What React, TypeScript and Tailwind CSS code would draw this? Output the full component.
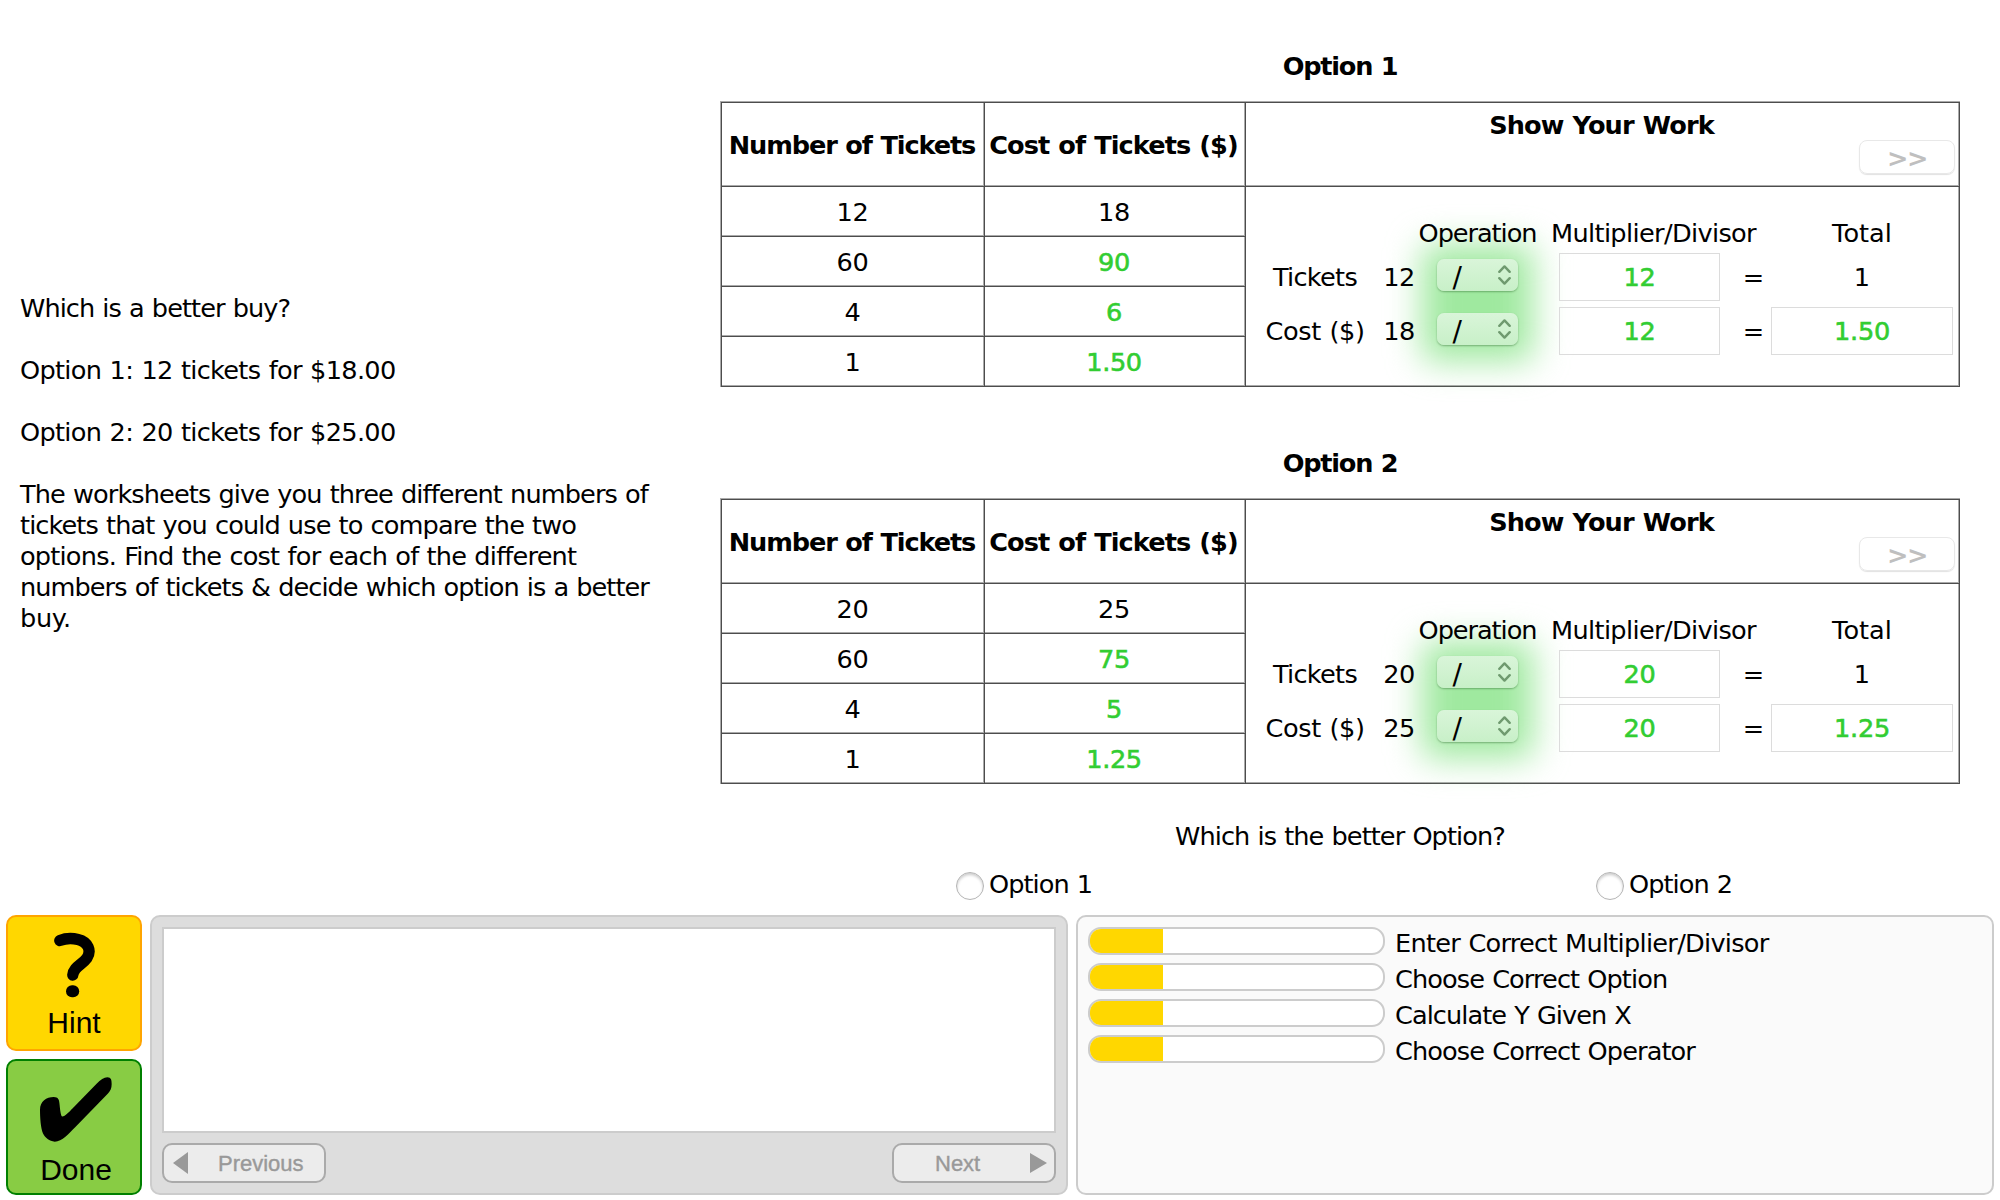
import React from "react";

type Work = { op: string; factor: string; total: string };
type Sheet = {
  title: string;
  rows: [string, string][];
  tickets: string;
  cost: string;
  work: Work;
};

const sheets: Sheet[] = [
  {
    title: "Option 1",
    rows: [["12", "18"], ["60", "90"], ["4", "6"], ["1", "1.50"]],
    tickets: "12",
    cost: "18",
    work: { op: "/", factor: "12", total: "1.50" },
  },
  {
    title: "Option 2",
    rows: [["20", "25"], ["60", "75"], ["4", "5"], ["1", "1.25"]],
    tickets: "20",
    cost: "25",
    work: { op: "/", factor: "20", total: "1.25" },
  },
];

const skills = [
  { name: "Enter Correct Multiplier/Divisor", tracking: "tracking-[-0.72px]" },
  { name: "Choose Correct Option", tracking: "tracking-[-0.91px]" },
  { name: "Calculate Y Given X", tracking: "tracking-[-0.94px]" },
  { name: "Choose Correct Operator", tracking: "tracking-[-0.89px]" },
];

const cell =
  "flex items-center justify-center border-r border-b border-[#4d4d4d] shadow-[inset_-1px_-1px_0_0_#aaaaaa]";

function OperatorSelect({ value }: { value: string }) {
  return (
    <div className="relative -top-[3px] -left-px flex h-8 w-[81px] items-center justify-between rounded-[7px] bg-linear-to-b from-[#d9f5d9] to-[#c8f0c8] pr-[7px] pl-[16px] shadow-[0_1px_2px_rgba(0,60,0,0.35)]">
      <span className="pt-1.5 text-[28px]">{value}</span>
      <svg width="13" height="20" viewBox="0 0 13 20" fill="none" stroke="#6f9a6f" strokeWidth="2.4" strokeLinecap="round" strokeLinejoin="round">
        <path d="M1.3 6.800 6.500 1.400l5.200 5.400M1.300 13.200l5.200 5.400 5.200-5.400" />
      </svg>
    </div>
  );
}

function Field({ value, className }: { value: string; className: string }) {
  return (
    <div className={`relative -top-px flex h-12 items-center justify-center border border-[#dcdcdc] pt-0.5 tracking-[-0.2px] text-[#32cd32] [-webkit-text-stroke:0.6px_#32cd32] ${className}`}>
      {value}
    </div>
  );
}

function Worksheet({ sheet }: { sheet: Sheet }) {
  const { work } = sheet;
  return (
    <section className="w-[1240px]">
      <h2 className="h-[50px] text-center font-bold tracking-[-1.25px]">{sheet.title}</h2>
      <div className="flex border-t border-l border-[#aaaaaa]">
        <div className="grid grow grid-cols-[263px_261px_714px] grid-rows-[84px_50px_50px_50px_50px] border-t border-l border-[#4d4d4d]">
          <div className={`${cell} pt-0.5 pr-[2px] font-bold tracking-[-1.12px] whitespace-nowrap`}>Number of Tickets</div>
          <div className={`${cell} pt-0.5 pr-[3px] font-bold tracking-[-0.9px] whitespace-nowrap`}>Cost of Tickets ($)</div>
          <div className={`${cell} relative !items-start pt-[7px] pr-[2px] font-bold tracking-[-0.85px]`}>
            Show Your Work
            <button className="absolute top-[37px] right-1 flex h-[34px] w-24 items-center justify-center rounded-lg border border-[#e8e8e8] pt-[3px] tracking-[-1.5px] text-[#bfbfbf] shadow-[0_1px_1px_rgba(0,0,0,0.12)]">
              &gt;&gt;
            </button>
          </div>
          {sheet.rows.map(([n, c], i) => (
            <React.Fragment key={n}>
              <div className={`${cell} col-start-1 pt-0.5 pr-[1px] tracking-[-0.4px]`}>{n}</div>
              <div className={`${cell} pt-0.5 pr-[2px] tracking-[-0.4px] ${i > 0 ? "text-[#32cd32] [-webkit-text-stroke:0.6px_#32cd32]" : ""}`}>{c}</div>
            </React.Fragment>
          ))}
          <div className={`${cell} relative isolate col-start-3 row-span-4 row-start-2`}>
            <div className="absolute top-[58px] left-[176px] -z-10 h-[116px] w-[111px] rounded-lg bg-[#9fe99f] blur-[17px]" />
            <div className="grid h-[138px] w-full grid-cols-[130px_38px_120px_203px_25px_192px] grid-rows-[30px_48px_48px] items-center justify-items-center gap-y-1.5 pl-1">
              <span className="col-start-3 pt-0.5 pr-px tracking-[-1.06px]">Operation</span>
              <span className="col-span-2 pt-0.5 pl-[3px] tracking-[-0.64px]">Multiplier/Divisor</span>
              <span className="pt-0.5">Total</span>

              <span className="tracking-[-0.7px]">Tickets</span>
              <span className="tracking-[-0.6px]">{sheet.tickets}</span>
              <OperatorSelect value={work.op} />
              <Field value={work.factor} className="w-[161px]" />
              <span>=</span>
              <span>1</span>

              <span className="tracking-[-0.4px]">Cost ($)</span>
              <span className="tracking-[-0.6px]">{sheet.cost}</span>
              <OperatorSelect value={work.op} />
              <Field value={work.factor} className="w-[161px]" />
              <span>=</span>
              <Field value={work.total} className="w-[182px]" />
            </div>
          </div>
        </div>
      </div>
    </section>
  );
}

function Choice({ label }: { label: string }) {
  return (
    <label className="flex w-[640px] shrink-0 items-center gap-[5px] tracking-[-0.95px]">
      <span className="mt-0.5 h-7 w-7 rounded-full border border-[#b5b5b5] shadow-[inset_0_2px_3px_rgba(0,0,0,0.2)]" />
      {label}
    </label>
  );
}

export default function App() {
  return (
    <main className="flex h-[1200px] w-[2000px] flex-col overflow-hidden bg-white font-['DejaVu_Sans',sans-serif] text-[25.6px] leading-[31px] text-black [word-spacing:0.034em]">
      <div className="flex h-[915px]">
        <div className="flex w-[720px] flex-col gap-[31px] pt-[293px] pl-5">
          <p className="tracking-[-0.93px]">Which is a better buy?</p>
          <p className="tracking-[-0.69px]">Option 1: 12 tickets for $18.00</p>
          <p className="tracking-[-0.69px]">Option 2: 20 tickets for $25.00</p>
          <p className="tracking-[-0.9px] whitespace-nowrap">
            The worksheets give you three different numbers of
            <br />
            tickets that you could use to compare the two
            <br />
            <span className="tracking-[-0.8px]">options. Find the cost for each of the different</span>
            <br />
            <span className="tracking-[-0.95px]">numbers of tickets &amp; decide which option is a better</span>
            <br />
            <span className="tracking-[-0.3px]">buy.</span>
          </p>
        </div>
        <div className="flex w-[1240px] flex-col pt-[51px]">
          <div className="flex flex-col gap-[61px]">
            {sheets.map((s) => (
              <Worksheet key={s.title} sheet={s} />
            ))}
          </div>
          <p className="mt-[37px] text-center tracking-[-0.92px]">Which is the better Option?</p>
          <div className="mt-[17px] flex pl-[236px]">
            <Choice label="Option 1" />
            <Choice label="Option 2" />
          </div>
        </div>
      </div>

      <div className="flex h-[280px] pl-1.5">
        <div className="flex w-[136px] flex-col gap-2 font-['Liberation_Sans',Arial,sans-serif] text-[30px]">
          <button className="flex h-[136px] flex-col items-center rounded-[10px] border-2 border-[#ffa500] bg-[#ffd700] pt-[15px]">
            <svg width="42" height="67" viewBox="52 931.500 42 67" fill="none">
              <path d="M58.800 940C64 938 71 937.500 77 939C87.500 941.500 90.500 950.500 86 957.500C81.500 964 72.500 966.500 71.800 974.500" stroke="#000" strokeWidth="11.300" strokeLinecap="round" strokeLinejoin="round" />
              <rect x="65" y="984.800" width="13.200" height="12" rx="6" fill="#000" />
            </svg>
            <span className="mt-[8px]">Hint</span>
          </button>
          <button className="flex h-[136px] flex-col items-center rounded-[10px] border-2 border-[#008000] bg-[#88cc44] pt-4">
            <svg className="ml-[3px]" width="72" height="65" viewBox="121 531 215 192">
              <path d="M121 628C121 603 140 590 162 590C176 590 178 599 179 608C181 626 183 648 188 648C195 648 210 632 218 624L290 550C302 538 312 531 322 531C334 531 335 541 335 551C335 564 331 572 324 579L226 680C208 698 187 723 165 723C149 723 136 711 130 699C123 683 121 650 121 628Z" />
            </svg>
            <span className="mt-[12px] pl-1">Done</span>
          </button>
        </div>

        <div className="ml-2 flex w-[918px] flex-col rounded-[10px] border-2 border-[#cccccc] bg-[#dddddd] px-2.5 pt-2.5 font-['Liberation_Sans',Arial,sans-serif] text-[22px] text-[#999999]">
          <div className="h-[206px] border-2 border-[#cccccc] bg-white" />
          <div className="mt-2.5 flex justify-between">
            <button className="flex h-10 w-[164px] items-center rounded-[10px] border-2 border-[#aaaaaa] bg-[#ececec] pl-[9px] [-webkit-text-stroke:0.4px_#999999]">
              <svg width="15" height="22" viewBox="0 0 15 22" fill="#999999">
                <path d="M15 0v22L0 11z" />
              </svg>
              <span className="pl-[30px]">Previous</span>
            </button>
            <button className="flex h-10 w-[164px] items-center justify-between rounded-[10px] border-2 border-[#aaaaaa] bg-[#ececec] pr-[7px] pl-[41px] [-webkit-text-stroke:0.4px_#999999]">
              <span>Next</span>
              <svg width="17" height="20" viewBox="0 0 17 20" fill="#999999">
                <path d="M0 0v20l17-10z" />
              </svg>
            </button>
          </div>
        </div>

        <div className="ml-2 flex w-[918px] flex-col gap-2 rounded-[10px] border-2 border-[#cccccc] bg-[#fafafa] px-2.5 pt-2.5">
          {skills.map((s) => (
            <div key={s.name} className="flex h-7 gap-2.5">
              <div className="h-7 w-[297px] overflow-hidden rounded-[13px] border-2 border-[#cccccc] bg-white">
                <div className="h-full w-1/4 bg-[#ffd700]" />
              </div>
              <span className={`pt-px ${s.tracking}`}>{s.name}</span>
            </div>
          ))}
        </div>
      </div>
    </main>
  );
}
